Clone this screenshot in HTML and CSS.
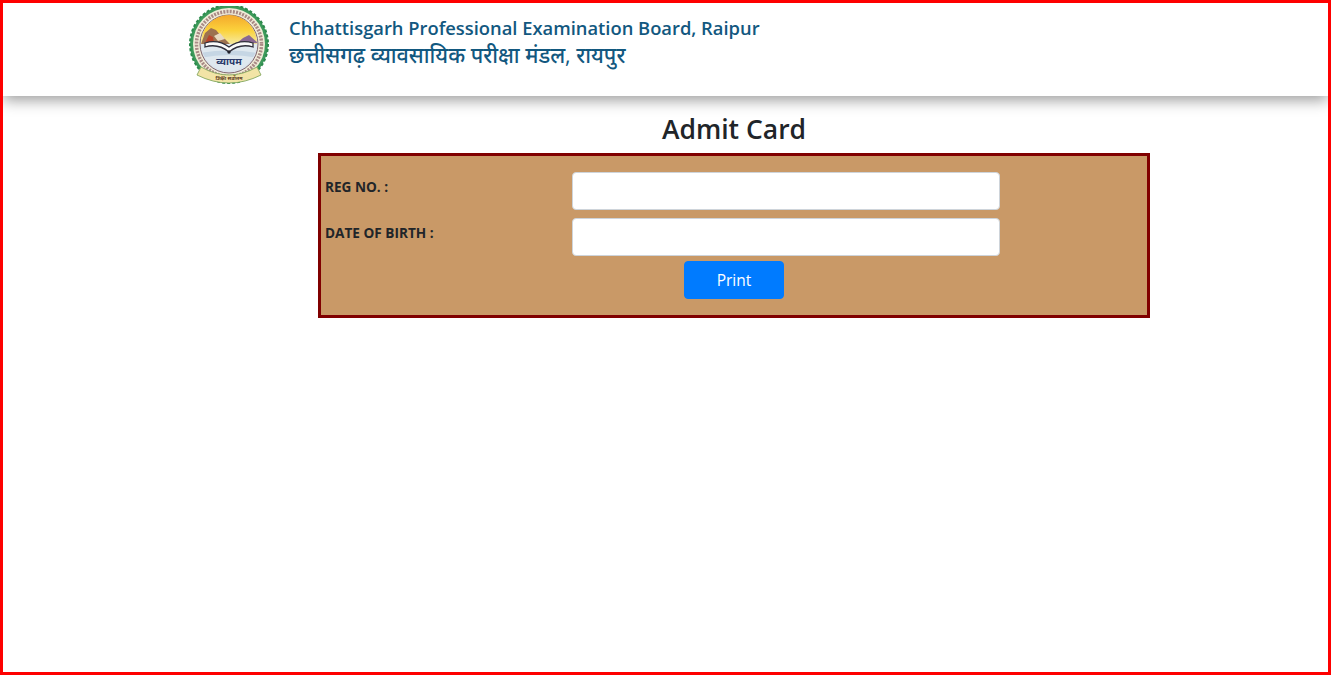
FILE: index.html
```html
<!DOCTYPE html>
<html lang="en">
<head>
  <meta charset="UTF-8" />
  <meta name="viewport" content="width=device-width, initial-scale=1.0"/>
  <title>Admit Card | CG Vyapam</title>
  <link rel="stylesheet" href="styles.css">
</head>
<body>

  <!-- Header -->
  <header class="site-header">
    <svg class="logo" viewBox="0 0 82 80" width="82" height="80" role="img" aria-label="Vyapam logo">
      <defs>
        <linearGradient id="sky" x1="0" y1="0" x2="0" y2="1">
          <stop offset="0" stop-color="#f4a62a"/>
          <stop offset="0.55" stop-color="#fbd23c"/>
          <stop offset="1" stop-color="#f6eaa0"/>
        </linearGradient>
        <clipPath id="inner"><circle cx="41" cy="37" r="28"/></clipPath>
      </defs>
      <circle cx="41" cy="38" r="39" fill="#3d9a5b" stroke="#2c8a4c" stroke-width="2" stroke-dasharray="3 2"/>
      <circle cx="41" cy="38" r="36" fill="#f1ecd8"/>
      <circle cx="41" cy="38" r="32.5" fill="none" stroke="#a98a86" stroke-width="3.5" stroke-dasharray="2 1.2"/>
      <circle cx="41" cy="38" r="29" fill="#dbe4ec" stroke="#7f6670" stroke-width="1"/>
      <g clip-path="url(#inner)">
        <rect x="12" y="8" width="58" height="30" fill="url(#sky)"/>
        <path d="M13 38 L17 27 L23 22 L28 24 L33 30 L37 33 L42 38 Z" fill="#9c7150"/>
        <path d="M17 37 L21 29 L25 31 L26 37 Z" fill="#b8442a"/>
        <path d="M26 30 L32 27 L37 33 L30 35 Z" fill="#e8d9c0"/>
        <path d="M48 38 L55 32 L61 29 L70 37 Z" fill="#8a6a92"/>
        <rect x="12" y="38" width="58" height="28" fill="#dfe8ef"/>
        <path d="M12 52 Q41 46 70 52 L70 47 Q41 42 12 47 Z" fill="#c6d6e4"/>
      </g>
      <path d="M17 37 Q30 33 41 41 Q52 33 65 37 L65 41 Q52 37 41 46 Q30 37 17 41 Z" fill="#fbfbfb" stroke="#30303c" stroke-width="1.3"/>
      <circle cx="41" cy="46" r="1.7" fill="#20202a"/>
      <text x="41" y="59" class="logo-word">व्यापम</text>
      <path d="M13 61 Q41 77 69 61 L73 69 Q41 85 9 69 Z" fill="#f2e4a6" stroke="#86a860" stroke-width="0.9"/>
      <text x="41" y="74" class="logo-motto">शिक्षा सर्वोत्तम</text>
    </svg>
    <div class="board-name">
      <div class="name-en">Chhattisgarh Professional Examination Board, Raipur</div>
      <div class="name-hi">छत्तीसगढ़ व्यावसायिक परीक्षा मंडल, रायपुर</div>
    </div>
  </header>

  <main class="content">
    <h1>Admit Card</h1>

    <form class="admit-form">
      <label class="form-label" for="regNo">REG NO. :</label>
      <input class="form-input" id="regNo" type="text" />

      <label class="form-label" for="dob">DATE OF BIRTH :</label>
      <input class="form-input" id="dob" type="text" />

      <div class="form-actions">
        <button class="print-btn" type="button">Print</button>
      </div>
    </form>
  </main>

</body>
</html>
```

FILE: styles.css
```css
* {
  margin: 0;
  padding: 0;
  box-sizing: border-box;
  font-family: "Open Sans", "Noto Sans", "Noto Sans Devanagari", sans-serif;
}

html, body {
  height: 100%;
}

body {
  background-color: #fff;
  border: 3px solid #fe0000;
  color: #212529;
  overflow: hidden;
}

.site-header {
  height: 93px;
  display: flex;
  align-items: flex-start;
  padding: 3px 0 0 185px;
  background-color: #fff;
  box-shadow: 0 4px 14px rgba(0, 0, 0, 0.4);
}

.logo {
  flex-shrink: 0;
}

.logo-word {
  font-size: 10px;
  font-weight: 700;
  fill: #2a3a6a;
  text-anchor: middle;
}

.logo-motto {
  font-size: 5px;
  font-weight: 700;
  fill: #5a3a20;
  text-anchor: middle;
}

.board-name {
  margin: 9px 0 0 19px;
  color: #12587f;
}

.name-en {
  font-size: 18.35px;
  font-weight: 600;
  line-height: 26px;
}

.name-hi {
  font-size: 21.5px;
  font-weight: 500;
  line-height: 28px;
}

.content {
  width: 832px;
  margin-left: 315px;
}

h1 {
  font-size: 26.5px;
  font-weight: 600;
  line-height: 36px;
  margin-top: 15px;
  margin-bottom: 6px;
  text-align: center;
}

.admit-form {
  display: grid;
  grid-template-columns: 247px 428px;
  grid-auto-rows: 38px;
  row-gap: 8px;
  height: 165px;
  padding: 16px 0 0 4px;
  background-color: #c99967;
  border: 3px solid #800000;
}

.form-label {
  font-size: 13.6px;
  font-weight: 700;
  line-height: 30px;
}

.form-input {
  background-color: #fff;
  border: 1px solid #ced4da;
  border-radius: 4px;
}

.form-actions {
  grid-column: 1 / -1;
  display: flex;
  justify-content: center;
  width: 818px;
  margin-top: -3px;
}

.print-btn {
  width: 100px;
  height: 38px;
  background-color: #007bff;
  border: 1px solid #007bff;
  border-radius: 4px;
  color: #fff;
  font-size: 15.5px;
}
```
